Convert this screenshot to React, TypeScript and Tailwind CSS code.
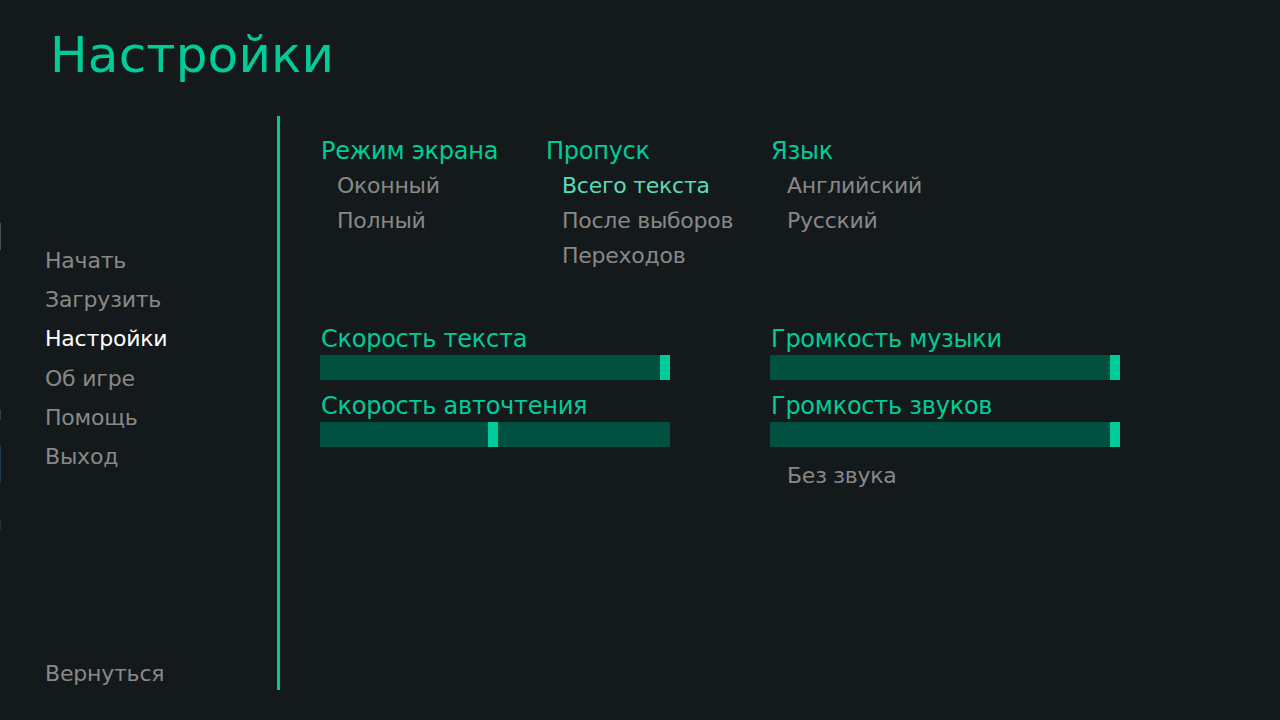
import React from "react";

const font = { fontFamily: '"DejaVu Sans", "Noto Sans", sans-serif' };

function Slider({ value }: { value: number }) {
  const left = Math.round(value * 340);
  return (
    <div className="relative h-[25px] w-[350px] bg-[#005040]">
      <div className="absolute top-0 h-[25px] w-[10px] bg-[#00cc99]" style={{ left }} />
    </div>
  );
}

function Label({ children }: { children: React.ReactNode }) {
  return (
    <div className="text-[24px] leading-[28px] tracking-[-0.25px] text-[#00cc99] pl-[1px]">{children}</div>
  );
}

function SLabel({ children }: { children: React.ReactNode }) {
  return (
    <div className="text-[24px] leading-[24px] pb-[4px] tracking-[-0.25px] text-[#00cc99] pl-[1px]">
      {children}
    </div>
  );
}

function Opt({ children, state = "idle" }: { children: React.ReactNode; state?: "idle" | "sel" }) {
  return (
    <div
      className={
        "text-[22px] leading-[35px] tracking-[-0.25px] pl-[17px] " +
        (state === "sel" ? "text-[#5fd9b5]" : "text-[#888888]")
      }
    >
      {children}
    </div>
  );
}

export default function App() {
  const nav = ["Начать", "Загрузить", "Настройки", "Об игре", "Помощь", "Выход"];
  return (
    <div className="relative w-[1280px] h-[720px] bg-[#141a1b] overflow-hidden flex flex-col" style={font}>
      <div className="absolute left-0 top-[223px] w-[1px] h-[27px] bg-[#4a4f50]" />
      <div className="absolute left-0 top-[410px] w-[1px] h-[10px] bg-[#3a3f40]" />
      <div className="absolute left-0 top-[445px] w-[1px] h-[38px] bg-[#1f3a55]" />
      <div className="absolute left-0 top-[520px] w-[1px] h-[10px] bg-[#1f3347]" />
      <div className="h-[116px] pt-[26px] pl-[50px]">
        <div className="text-[50px] leading-[58px] tracking-[0.2px] text-[#00cc99]">Настройки</div>
      </div>
      <div className="flex h-[574px]">
        <div className="w-[277px] flex flex-col pl-[45px]">
          <div className="pt-[125px] flex flex-col">
            {nav.map((n) => (
              <div
                key={n}
                className={
                  "text-[22px] leading-[39.2px] tracking-[-0.2px] " +
                  (n === "Настройки" ? "text-white" : "text-[#888888]")
                }
              >
                {n}
              </div>
            ))}
          </div>
          <div className="mt-auto mb-[-3px] text-[22px] leading-[39px] tracking-[-0.2px] text-[#888888]">
            Вернуться
          </div>
        </div>
        <div className="w-[3px] bg-[#00cc99]" />
        <div className="flex-1 pl-[40px] pt-[21px] flex flex-col">
          <div className="flex">
            <div className="w-[225px] flex flex-col">
              <Label>Режим экрана</Label>
              <div className="mt-[3px]">
                <Opt>Оконный</Opt>
                <Opt>Полный</Opt>
              </div>
            </div>
            <div className="w-[225px] flex flex-col">
              <Label>Пропуск</Label>
              <div className="mt-[3px]">
                <Opt state="sel">Всего текста</Opt>
                <Opt>После выборов</Opt>
                <Opt>Переходов</Opt>
              </div>
            </div>
            <div className="w-[225px] flex flex-col">
              <Label>Язык</Label>
              <div className="mt-[3px]">
                <Opt>Английский</Opt>
                <Opt>Русский</Opt>
              </div>
            </div>
          </div>
          <div className="flex mt-[54px]">
            <div className="w-[450px] flex flex-col">
              <SLabel>Скорость текста</SLabel>
              <Slider value={1} />
              <div className="mt-[14px]">
                <SLabel>Скорость авточтения</SLabel>
              </div>
              <Slider value={0.495} />
            </div>
            <div className="w-[450px] flex flex-col">
              <SLabel>Громкость музыки</SLabel>
              <Slider value={1} />
              <div className="mt-[14px]">
                <SLabel>Громкость звуков</SLabel>
              </div>
              <Slider value={1} />
              <div className="mt-[11px]">
                <Opt>Без звука</Opt>
              </div>
            </div>
          </div>
        </div>
      </div>
    </div>
  );
}
